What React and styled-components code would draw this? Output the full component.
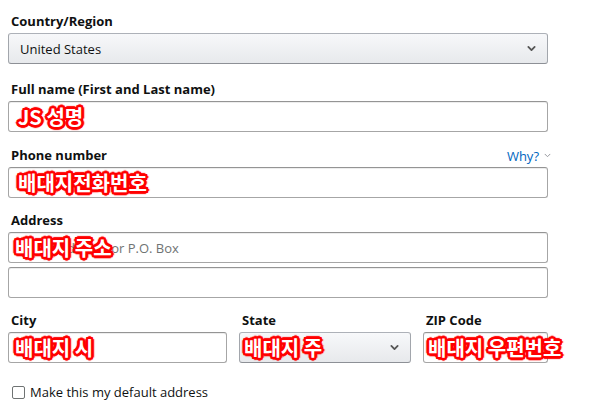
import React from 'react';
import styled, { createGlobalStyle } from 'styled-components';

const GlobalStyle = createGlobalStyle`
    html, body {
        margin: 0;
        padding: 0;
        background: #fff;
    }
    body {
        font-family: "Open Sans", "Liberation Sans", Arial, sans-serif;
        color: #0f1111;
    }
`;

const Form = styled.form`
    width: 540px;
    padding: 12px 0 0 8px;
    display: flex;
    flex-direction: column;
`;

const Group = styled.div`
    display: flex;
    flex-direction: column;
    margin-bottom: ${(p) => p.$gap ?? 13}px;
`;

const LabelRow = styled.div`
    display: flex;
    justify-content: space-between;
    align-items: center;
    height: 19px;
    margin-bottom: 2px;
    padding-left: 3px;
`;

const Label = styled.label`
    font-size: 13px;
    font-weight: 700;
    line-height: 19px;
    color: #0f1111;
`;

const Why = styled.a`
    display: flex;
    align-items: center;
    gap: 5px;
    font-size: 13px;
    color: #0066c0;
    margin-right: -3px;
    cursor: pointer;

    & svg {
        color: #8d9096;
    }
`;

const Field = styled.div`
    position: relative;
    width: 100%;
    & + & {
        margin-top: 4px;
    }
`;

const Input = styled.div`
    box-sizing: border-box;
    height: 31px;
    border: 1px solid #a6a6a6;
    border-top-color: #949494;
    border-radius: 3px;
    box-shadow: 0 1px 0 rgba(0, 0, 0, 0.07) inset;
    background: #fff;
    padding: 0 11px;
    display: flex;
    align-items: center;
    font-size: 13px;
    color: ${(p) => (p.$placeholder ? '#6f7373' : '#0f1111')};
`;

const Select = styled.div`
    box-sizing: border-box;
    height: 31px;
    border: 1px solid;
    border-color: #adb1b8 #a2a6ac #8d9096;
    border-radius: 3px;
    background: linear-gradient(to bottom, #f7f8fa, #e7e9ec);
    padding: 0 11px;
    display: flex;
    align-items: center;
    justify-content: space-between;
    font-size: 13px;
    color: #0f1111;

    & svg {
        color: #555;
    }
`;

const Mark = styled.span`
    position: absolute;
    left: ${(p) => p.$x}px;
    top: 50%;
    transform: translateY(-50%);
    white-space: nowrap;
    font-family: "Noto Sans CJK KR", "Liberation Sans", sans-serif;
    font-weight: 700;
    font-size: 20px;
    line-height: 24px;
    color: #fff;
    pointer-events: none;
    text-shadow:
        2px 0 0 #f00, -2px 0 0 #f00, 0 2px 0 #f00, 0 -2px 0 #f00,
        2px 2px 0 #f00, -2px -2px 0 #f00, 2px -2px 0 #f00, -2px 2px 0 #f00,
        1px 2px 0 #f00, 2px 1px 0 #f00, -1px 2px 0 #f00, -2px 1px 0 #f00,
        1px -2px 0 #f00, 2px -1px 0 #f00, -1px -2px 0 #f00, -2px -1px 0 #f00,
        3px 0 1px #f00, -3px 0 1px #f00, 0 3px 1px #f00, 0 -3px 1px #f00;
`;

const Row = styled.div`
    display: flex;
    justify-content: space-between;
    margin-bottom: 21px;
`;

const Col = styled.div`
    display: flex;
    flex-direction: column;
    width: ${(p) => p.$w}px;
`;

const Check = styled.label`
    display: flex;
    align-items: center;
    gap: 5px;
    padding-left: 4px;
    font-size: 13px;
    line-height: 16px;
    color: #0f1111;
`;

const Box = styled.span`
    box-sizing: border-box;
    width: 13px;
    height: 13px;
    border: 1px solid #6f7373;
    border-radius: 2px;
    background: #fff;
`;

const Chevron = ({ size = 9, width = 2 }) => (
    <svg width={size} height={size} viewBox="0 0 10 10" fill="none">
        <path d="M1.5 3.2 L5 6.7 L8.5 3.2" stroke="currentColor" strokeWidth={width} strokeLinecap="round" strokeLinejoin="round" />
    </svg>
);

const App = () => {
    return (
        <>
            <GlobalStyle />
            <Form>
                <Group $gap={16}>
                    <LabelRow>
                        <Label>Country/Region</Label>
                    </LabelRow>
                    <Select>
                        United States
                        <Chevron />
                    </Select>
                </Group>

                <Group $gap={14}>
                    <LabelRow>
                        <Label>Full name (First and Last name)</Label>
                    </LabelRow>
                    <Field>
                        <Input />
                        <Mark $x={10}>JS 성명</Mark>
                    </Field>
                </Group>

                <Group>
                    <LabelRow>
                        <Label>Phone number</Label>
                        <Why>
                            Why?
                            <Chevron size={7} width={1.3} />
                        </Why>
                    </LabelRow>
                    <Field>
                        <Input />
                        <Mark $x={10}>배대지전화번호</Mark>
                    </Field>
                </Group>

                <Group>
                    <LabelRow>
                        <Label>Address</Label>
                    </LabelRow>
                    <Field>
                        <Input $placeholder>Street address or P.O. Box</Input>
                        <Mark $x={7}>배대지 주소</Mark>
                    </Field>
                    <Field>
                        <Input />
                    </Field>
                </Group>

                <Row>
                    <Col $w={219}>
                        <LabelRow>
                            <Label>City</Label>
                        </LabelRow>
                        <Field>
                            <Input />
                            <Mark $x={7}>배대지 시</Mark>
                        </Field>
                    </Col>
                    <Col $w={172}>
                        <LabelRow>
                            <Label>State</Label>
                        </LabelRow>
                        <Field>
                            <Select>
                                <span />
                                <Chevron />
                            </Select>
                            <Mark $x={5}>배대지 주</Mark>
                        </Field>
                    </Col>
                    <Col $w={125}>
                        <LabelRow>
                            <Label>ZIP Code</Label>
                        </LabelRow>
                        <Field>
                            <Input />
                            <Mark $x={5}>배대지 우편번호</Mark>
                        </Field>
                    </Col>
                </Row>

                <Check>
                    <Box />
                    Make this my default address
                </Check>
            </Form>
        </>
    );
};

export default App;
